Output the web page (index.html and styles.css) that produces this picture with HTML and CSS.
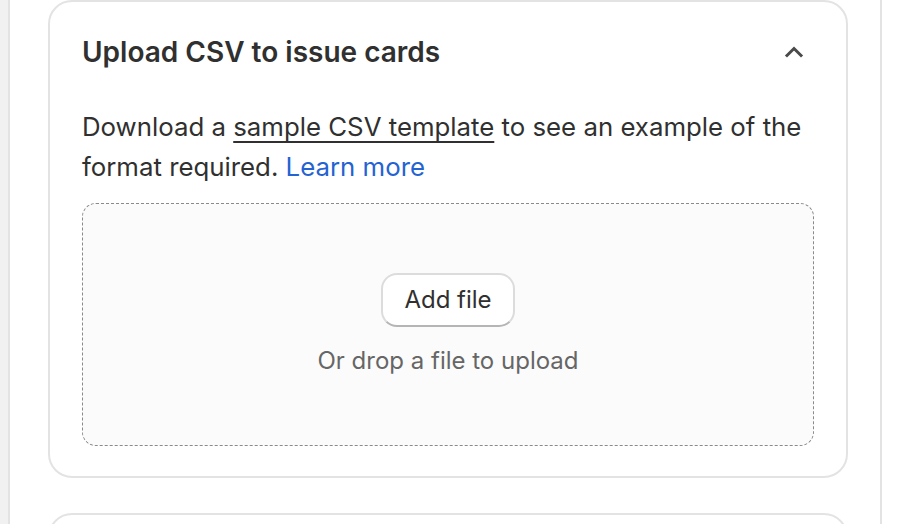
FILE: index.html
```html
<!DOCTYPE html>
<html lang="en">
<head>
<meta charset="utf-8">
<title>Upload CSV</title>
<link rel="stylesheet" href="styles.css">
</head>
<body>
<div class="frame">
  <div class="rail"></div>
  <main class="main">
    <section class="card">
      <div class="card-head">
        <h2 class="title">Upload CSV to issue cards</h2>
        <button class="chev" aria-label="Collapse">
          <svg width="24" height="24" viewBox="0 0 24 24" fill="none"><path d="M5 15.5l7-7 7 7" stroke="#4a4a4a" stroke-width="3" stroke-linecap="square" stroke-linejoin="miter"/></svg>
        </button>
      </div>
      <p class="desc">Download a <a class="ulink" href="#">sample CSV template</a> to see an example of the format required. <a class="blink" href="#">Learn more</a></p>
      <div class="drop">
        <button class="btn">Add file</button>
        <span class="hint">Or drop a file to upload</span>
      </div>
    </section>
    <section class="card card-next"></section>
  </main>
  <div class="side"></div>
</div>
</body>
</html>
```
FILE: styles.css
```css
* { box-sizing: border-box; }
html, body { margin: 0; padding: 0; background: #fff; }
body {
  font-family: Inter, "Noto Sans", sans-serif;
  color: #303030;
  width: 904px;
  height: 524px;
  overflow: hidden;
}
.frame { display: flex; height: 524px; }
.rail {
  width: 10px;
  flex: none;
  background: #f1f1f1;
  border-right: 2px solid #e3e3e3;
}
.main {
  width: 872px;
  flex: none;
  border-right: 2px solid #e3e3e3;
  padding: 0 32px 0 38px;
  display: flex;
  flex-direction: column;
  gap: 35px;
}
.side { flex: 1; background: #fff; }
.card {
  border: 2px solid #e3e3e3;
  border-radius: 24px;
  padding: 30px 32px 30px 32px;
  background: #fff;
  flex: none;
}
.card-next { height: 60px; padding: 0; }
.card-head {
  display: flex;
  align-items: center;
  justify-content: space-between;
  height: 40px;
}
.title {
  margin: 0;
  font-size: 28px;
  line-height: 40px;
  font-weight: 600;
  letter-spacing: 0;
}
.chev {
  border: 0;
  background: none;
  padding: 0;
  width: 24px;
  height: 24px;
  margin-right: 8px;
  display: flex;
}
.desc {
  margin: 35px 0 0 0;
  font-size: 25.8px;
  line-height: 40px;
}
.ulink { color: #303030; text-decoration: underline; text-underline-offset: 5px; text-decoration-thickness: 2px; }
.blink { color: #2463d1; text-decoration: none; }
.drop {
  margin-top: 16px;
  height: 243px;
  border: 1px dashed #8a8a8a;
  border-radius: 14px;
  background: #fbfbfb;
  display: flex;
  flex-direction: column;
  align-items: center;
  justify-content: center;
  gap: 14px;
  padding-top: 4px;
}
.btn {
  font-family: inherit;
  font-size: 24px;
  color: #303030;
  height: 54px;
  width: 134px;
  border-radius: 16px;
  border: 2px solid #dcdcdc;
  border-bottom-color: #b5b5b5;
  background: #fff;
  padding: 0;
}
.hint {
  font-size: 24px;
  line-height: 40px;
  color: #666;
}
```
